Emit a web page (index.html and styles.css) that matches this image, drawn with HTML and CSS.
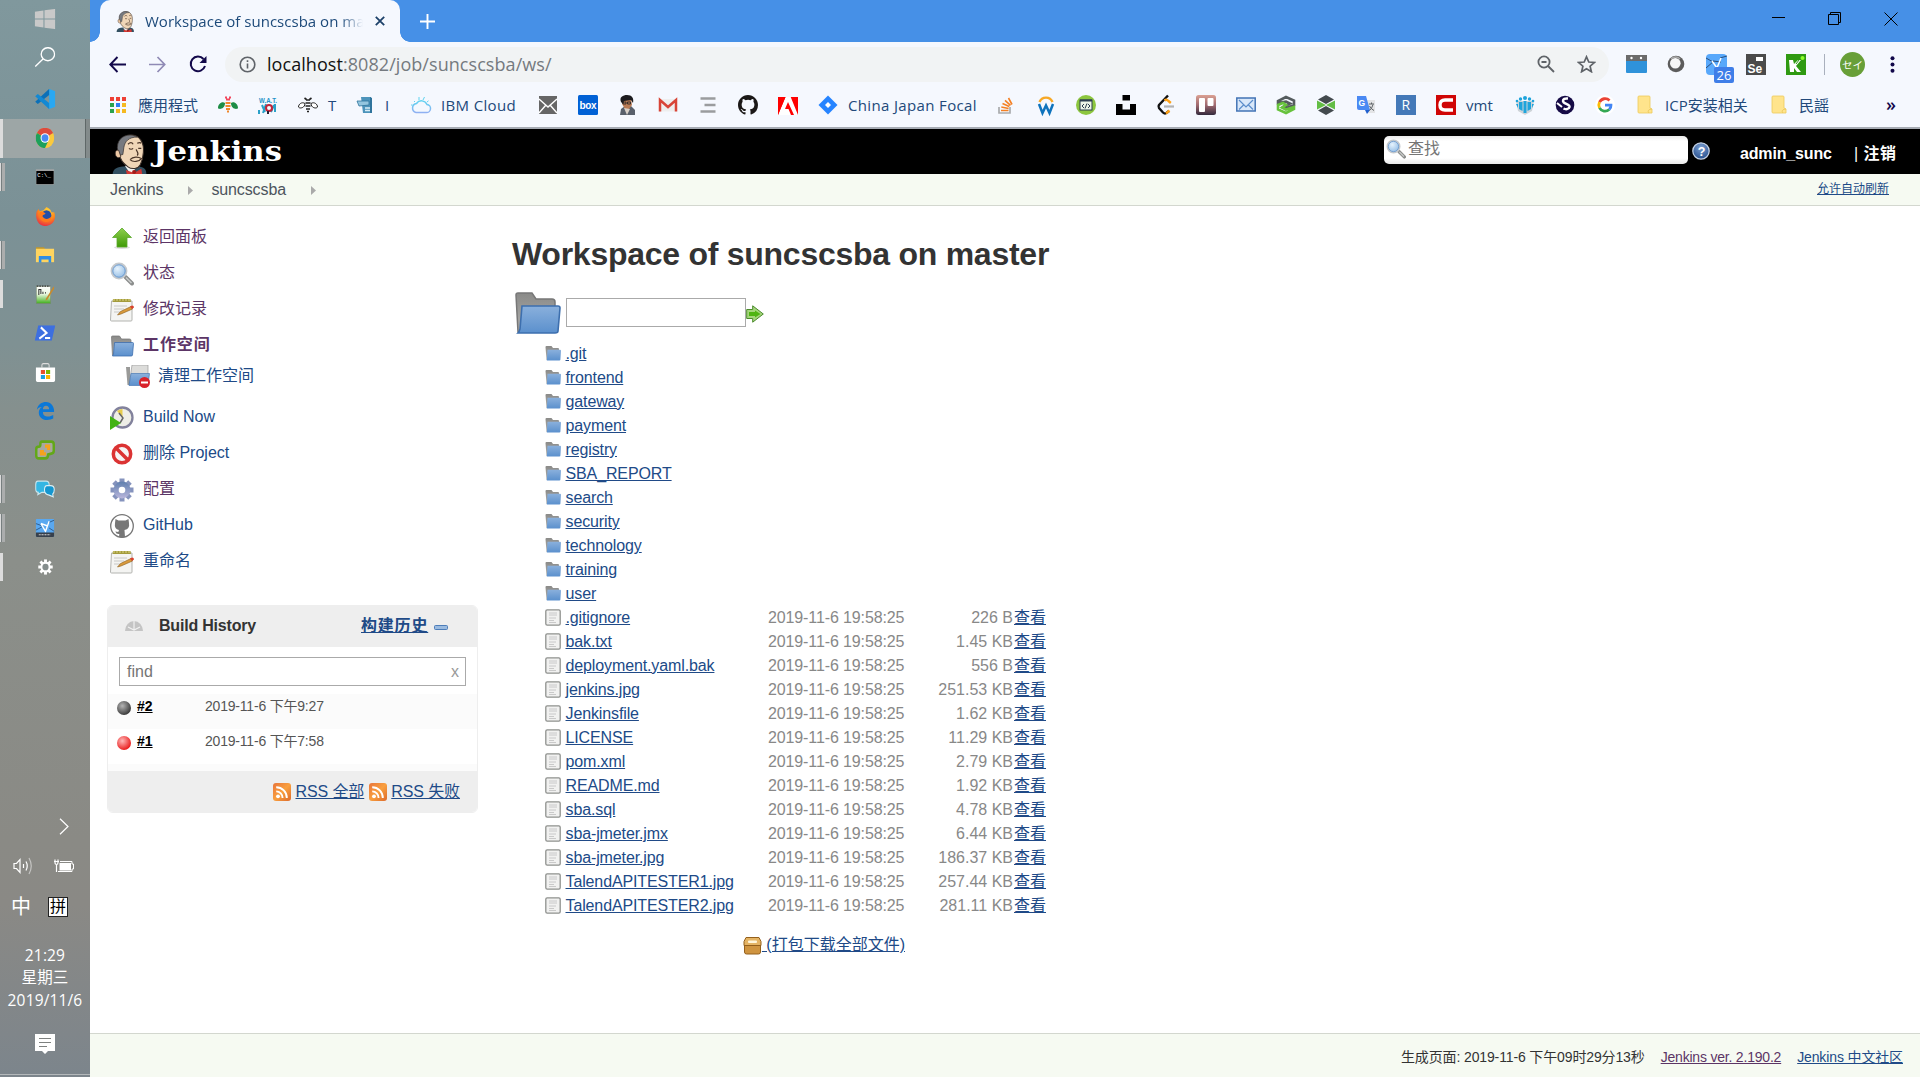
FILE: index.html
```html
<!DOCTYPE html>
<html lang="zh-CN">
<head>
<meta charset="utf-8">
<title>Workspace of suncscsba on master</title>
<link rel="stylesheet" href="styles.css">
</head>
<body>
<svg class="defs" width="0" height="0" aria-hidden="true">
  <defs>
    <linearGradient id="gBlue" x1="0" y1="0" x2="0" y2="1"><stop offset="0" stop-color="#8ab0dc"/><stop offset="1" stop-color="#5b90cd"/></linearGradient>
    <linearGradient id="gGray" x1="0" y1="0" x2="0" y2="1"><stop offset="0" stop-color="#8a8a88"/><stop offset="1" stop-color="#b0b0ae"/></linearGradient>
    <linearGradient id="gGreen" x1="0" y1="0" x2="0" y2="1"><stop offset="0" stop-color="#8fd04f"/><stop offset="1" stop-color="#3f9a06"/></linearGradient>
    <linearGradient id="gGear" x1="0" y1="0" x2="0" y2="1"><stop offset="0" stop-color="#5f7fae"/><stop offset="1" stop-color="#b9b6dc"/></linearGradient>
    <linearGradient id="gRss" x1="0" y1="0" x2="1" y2="1"><stop offset="0" stop-color="#e8743a"/><stop offset=".5" stop-color="#f9a03f"/><stop offset="1" stop-color="#dc6a2c"/></linearGradient>
    <linearGradient id="gTrello" x1="0" y1="0" x2="0" y2="1"><stop offset="0" stop-color="#dba193"/><stop offset=".5" stop-color="#a06a70"/><stop offset="1" stop-color="#33293c"/></linearGradient>
    <linearGradient id="gNote" x1="0" y1="0" x2="0" y2="1"><stop offset="0" stop-color="#fff"/><stop offset=".45" stop-color="#eaf7df"/><stop offset="1" stop-color="#3fae1c"/></linearGradient>
    <linearGradient id="gCloud" x1="0" y1="0" x2="0" y2="1"><stop offset="0" stop-color="#5fd3f0"/><stop offset="1" stop-color="#8fb0f2"/></linearGradient>
    <radialGradient id="gLens" cx=".4" cy=".35" r=".7"><stop offset="0" stop-color="#e6f3fd"/><stop offset="1" stop-color="#8db8e3"/></radialGradient>
    <radialGradient id="gBall" cx=".38" cy=".35" r=".65"><stop offset="0" stop-color="#b5b5b5"/><stop offset="1" stop-color="#3d3d3d"/></radialGradient>
    <radialGradient id="gRed" cx=".38" cy=".35" r=".65"><stop offset="0" stop-color="#ffb8b8"/><stop offset="1" stop-color="#ea2020"/></radialGradient>
    <radialGradient id="gHelp" cx=".5" cy=".3" r=".7"><stop offset="0" stop-color="#7c9fd0"/><stop offset="1" stop-color="#27508f"/></radialGradient>
    <radialGradient id="gFox" cx=".6" cy=".2" r=".9"><stop offset="0" stop-color="#ffd83a"/><stop offset=".5" stop-color="#ff8a1c"/><stop offset="1" stop-color="#e31c4c"/></radialGradient>
  </defs>
  <symbol id="butler" viewBox="0 0 34 40">
    <path d="M1 40c0-4 2-7 8-8l9-1 10 1c5 1 6 4 6 8z" fill="#335061"/>
    <path d="M13 31l6 9 6-9z" fill="#f2f2f0"/>
    <path d="M7 17C5 7 12 1 19 1c8 0 13 7 12 17-.3 4-1 8-3 12-2 4-8 5-12 2-4-3-8-6-9-15z" fill="#f0d6b7" stroke="#3b2f28" stroke-width="1"/>
    <path d="M6 17C4 6 11 1 18 1c3 0 5 1 7 2-8 0-12 4-13 10l-1 7-4 1z" fill="#777a80" stroke="#34302e" stroke-width=".7"/>
    <path d="M7 16c-3-1-4 2-3 5 1 2 3 3 5 1z" fill="#edc8a4" stroke="#3b2f28" stroke-width=".8"/>
    <path d="M16 10c2-2 4-2 5 0M25 9c2-1 3-1 4 0M17 14c1 1 3 1 4 0M26 14h3M24 15c1 3 3 4 1 6M18 25c3-3 8-3 11-1-2 3-8 4-11 1" fill="none" stroke="#4a3528" stroke-width="1.2"/>
    <path d="M14 35l8 3 7-4 1 6H15z" fill="#d33833"/><circle cx="22" cy="37" r="2" fill="#a51c18"/>
  </symbol>
  <symbol id="folder" viewBox="0 0 48 48">
    <path d="M3 8q0-2 2-2h14l4 6h16q3 0 3 3v30H5z" fill="url(#gGray)" stroke="#777" stroke-width="1.5"/>
    <path d="M9 19h36q2 0 2 2l-2 23q0 2-3 2H5q1-1 2-4z" fill="url(#gBlue)" stroke="#3d6fae" stroke-width="1.6"/>
  </symbol>
  <symbol id="folder-s" viewBox="0 0 16 20">
    <path d="M.5 4q0-1 1-1h5l1.500 2H13q1 0 1 1v11H1.500z" fill="url(#gGray)"/>
    <path d="M2.500 6.800H15q1 0 1 1l-.6 8.700q0 1-1 1H1.800z" fill="url(#gBlue)"/>
  </symbol>
  <symbol id="file" viewBox="0 0 16 20">
    <rect x=".8" y="2.800" width="14.400" height="15.400" rx="1.400" fill="#f1f1f0" stroke="#8f918e" stroke-width="1.300"/>
    <path d="M4 6h8M4 8h8M4 11h7M4 13.500h5M4 15.500h7" stroke="#c4c4c4" stroke-width=".9"/>
  </symbol>
  <symbol id="notepad" viewBox="0 0 24 24">
    <path d="M1.500 3h20.500v19q0 1-1 1H1.500q-1 0-1-1z" fill="#f4f4f2" stroke="#b3b4b0" stroke-width="1"/>
    <path d="M3 1h17.500l.5 3H2.500z" fill="#a39b3c"/><path d="M4 1v2M7 1v2M10 1v2M13 1v2M16 1v2M19 1v2" stroke="#e8e39a" stroke-width=".8"/>
    <path d="M4 8h13M4 11h10M4 14h6" stroke="#c8c8c6"/>
    <path d="M7.500 17l3-3.500L21 8.500l1.500 2.500L11 16z" fill="#d99a3c" stroke="#8a5c1b" stroke-width=".6"/><path d="M20 8.600l2-1q2 0 2 2l-2 1.500z" fill="#d9402c"/>
  </symbol>
  <symbol id="lens" viewBox="0 0 24 24">
    <path d="M15.500 15l6.500 6.500" stroke="#8b8d8c" stroke-width="4" stroke-linecap="round"/><path d="M16 15.500l5.500 5.500" stroke="#c9cbca" stroke-width="1.500"/>
    <circle cx="9" cy="9" r="7.400" fill="url(#gLens)" stroke="#c4c8cc" stroke-width="2"/><circle cx="9" cy="9" r="6.200" fill="none" stroke="#6c9bd0" stroke-width="1"/>
  </symbol>
  <symbol id="rss" viewBox="0 0 18 18"><rect width="18" height="18" rx="3" fill="url(#gRss)"/><circle cx="5" cy="13.300" r="1.900" fill="#fff"/><path d="M3.200 8.400a6.400 6.400 0 0 1 6.400 6.600M3.200 4.200a10.600 10.600 0 0 1 10.600 10.800" stroke="#fff" stroke-width="1.900" fill="none"/></symbol>
  <symbol id="cat" viewBox="0 0 16 16"><path d="M8 0C3.580 0 0 3.580 0 8c0 3.540 2.290 6.530 5.470 7.590.4.070.55-.17.55-.38 0-.19-.01-.82-.01-1.490-2.010.37-2.530-.49-2.690-.94-.09-.23-.48-.94-.82-1.130-.28-.15-.68-.52-.01-.53.630-.01 1.080.58 1.230.82.72 1.210 1.870.87 2.330.66.070-.52.28-.87.510-1.070-1.780-.2-3.640-.89-3.640-3.950 0-.87.31-1.590.82-2.150-.08-.2-.36-1.020.08-2.120 0 0 .67-.21 2.200.82a7.600 7.600 0 0 1 4 0c1.530-1.040 2.200-.82 2.200-.82.44 1.100.16 1.920.08 2.120.51.56.82 1.270.82 2.150 0 3.070-1.870 3.750-3.650 3.950.29.25.54.73.54 1.480 0 1.070-.01 1.930-.01 2.200 0 .21.15.46.55.38A8 8 0 0 0 16 8c0-4.420-3.580-8-8-8z" fill="#1b1817"/></symbol>
  <symbol id="note" viewBox="0 0 20 20"><path d="M4 1h10q1 0 1 1v11l2 1v4H4q-1 0-1-1V2q0-1 1-1z" fill="#ffe48c" stroke="#ecc95c" stroke-width=".8"/><path d="M14 18c-2-2 0-4 3-4" fill="none" stroke="#ecc95c"/></symbol>
</svg>

<aside class="taskbar">
  <div class="task task-start"><svg width="20" height="18" viewBox="0 0 20 18"><path d="M0 2.500l8.500-1.200v7.200H0zM9.500 1.200L20 0v8.500H9.500zM0 9.500h8.500v7.200L0 15.500zM9.500 9.500H20V18L9.500 16.800z" fill="#c9c9c9"/></svg></div>
  <div class="task task-search"><svg width="20" height="18" viewBox="0 0 20 18" fill="none" stroke="#fff" stroke-width="1.300"><ellipse cx="12.800" cy="6.500" rx="6.500" ry="5.800"/><path d="M8.300 10.500L.5 17.500"/></svg></div>
  <div class="task"><svg width="20" height="18" viewBox="0 0 20 18"><path d="M14 0l6 2v14l-6 2z" fill="#29a8f2"/><path d="M14 0v5.500L3 13.500.5 11.500z" fill="#0b70b8"/><path d="M14 18v-5.500L3 4.500.5 6.500z" fill="#1389d4"/></svg></div>
  <div class="task active solo"><svg width="18" height="18" viewBox="0 0 20 20"><circle cx="10" cy="10" r="10" fill="#fbc93d"/><path d="M10 10L1.300 5A10 10 0 0 1 18.700 5z" fill="#dd4b3e"/><path d="M10 10L1.300 5A10 10 0 0 0 10 20l4-8z" fill="#1da05c"/><circle cx="10" cy="10" r="4.800" fill="#fff"/><circle cx="10" cy="10" r="3.700" fill="#4a8af4"/></svg></div>
  <div class="task multi"><svg width="18" height="14" viewBox="0 0 18 14"><rect width="18" height="14" fill="#a8a8a8"/><rect x=".6" y="1.600" width="16.800" height="11.800" fill="#000"/><text x="1.500" y="6.600" font-family="Liberation Mono" font-size="5.500" fill="#fff">C:\_</text></svg></div>
  <div class="task"><svg width="19" height="18" viewBox="0 0 20 19"><path d="M1 5l2-2 1 2 4-1 3-3q5 2 5 5l3 0c3 9-4 13-9 13C2 19-1 11 1 5z" fill="url(#gFox)"/><circle cx="11" cy="9" r="5" fill="#234fa8"/><path d="M4 6c3-2 4 0 6 1-1 2-3 1-3 3 2 3 6 3 9 0 0 4-4 6-7 5C4 14 3 9 4 6z" fill="#ff7a1c"/></svg></div>
  <div class="task multi"><svg width="18" height="14" viewBox="0 0 18 14"><path d="M0 0h8l1 1.500H0z" fill="#d99a07"/><path d="M0 1.500h18V13.500H0z" fill="#ffd45f"/><path d="M3 14V8h12v6h-2.500v-3h-7v3z" fill="#2f8de4"/></svg></div>
  <div class="task solo"><svg width="18" height="18" viewBox="0 0 18 18"><rect x=".5" y="2" width="14" height="15.500" fill="url(#gNote)" stroke="#7a8a70" stroke-width=".6"/><path d="M1 2h13" stroke="#333" stroke-dasharray="1.500 1"/><path d="M3 10V5h2v4M7 7v2M9 8h1" stroke="#333" fill="none"/><path d="M17.500 2L10 13l-.5 2 1.800-1.200L18 4z" fill="#c98a2c"/></svg></div>
  <div class="task"><svg width="20" height="14" viewBox="0 0 20 14"><path d="M3.500 0H20l-3.500 14H0z" fill="#3d6fe0"/><path d="M6 2l5.500 5L4.500 12M10 11.500h5" stroke="#fff" stroke-width="1.900" fill="none"/></svg></div>
  <div class="task"><svg width="19" height="17" viewBox="0 0 19 17"><path d="M6 4V1.800Q6 .6 7.500.6h4Q13 .6 13 1.800V4" stroke="#ddd" fill="none"/><path d="M0 4h19v11q0 2-2 2H2q-2 0-2-2z" fill="#fff"/><path d="M5 6.300h4v3.500H5z" fill="#e8502c"/><path d="M10 6.300h4v3.500h-4z" fill="#7db800"/><path d="M5 10.700h4v3.500H5z" fill="#1ba1e2"/><path d="M10 10.700h4v3.500h-4z" fill="#fbb500"/></svg></div>
  <div class="task"><svg width="17" height="16" viewBox="0 0 17 16"><path d="M0 7C1 2 5 0 9 0c5 0 8 4 8 9H6c0 3 2 4 5 4 2 0 3.500-.6 5-1.400v3.200C14.500 15.600 12.500 16 10 16c-5 0-8-3-8-6.500 0-2 1-4 3-5C2.500 4.600 1 5.500 0 7zm6-.5h6c0-2-1-3.200-3-3.200S6 4.800 6 6.500z" fill="#0b78d8"/></svg></div>
  <div class="task"><svg width="20" height="18" viewBox="0 0 20 18"><path d="M7 1.500h9q2.500 0 2.500 2.500v6q0 2-2.500 2.200L13 13q0 3.500-3 3.500H4Q1.500 16.500 1.500 14V8Q1.500 6 4 6q1.500-.2 1.500-2Q5.500 1.500 7 1.500z" fill="#a7a8a0" stroke="#62a818" stroke-width="2.400"/><path d="M10 4h5v5h-3v-2h-2zM5 9h4v2h2v3H5z" fill="#f5a21c"/></svg></div>
  <div class="task multi"><svg width="20" height="16" viewBox="0 0 20 16"><path d="M3 1h8q3 0 3 3v4q0 3-4 3H7l-4 2 .500-2Q1 11 1 8V4q0-3 2-3z" fill="#35b6e3" stroke="#c9e6ee"/><path d="M12 5h3.500Q19 5 19 8.500q0 3-1.500 4l.5 2.500-4-1.500Q9.500 13 9.500 9T12 5z" fill="#1596cf" stroke="#dceef3"/></svg></div>
  <div class="task multi"><svg width="18" height="16" viewBox="0 0 18 16"><rect width="18" height="16" rx="1" fill="#5aa8f0"/><path d="M0 4l6 2M13 3l5-2M0 10l6-3M13 8l5 3" stroke="#2d5580" fill="none" stroke-width=".8"/><path d="M5 4l4.500 7L13 2M5 4l6 2" stroke="#fff" fill="none" stroke-width="1.300"/><path d="M0 12h18v3q0 1-1 1H1q-1 0-1-1z" fill="#37404c"/><path d="M3 14h11" stroke="#ddd" stroke-dasharray="1 .5"/></svg></div>
  <div class="task solo"><svg width="15" height="14" viewBox="0 0 20 20"><g stroke="#fff" stroke-width="4"><path d="M10 0v20M0 10h20M3 3l14 14M17 3L3 17"/></g><circle cx="10" cy="10" r="7" fill="#fff"/><circle cx="10" cy="10" r="4.300" fill="#858e8d"/></svg></div>

  <div class="tray">
    <div class="tray-row tray-more"><svg width="10" height="17" viewBox="0 0 10 17"><path d="M1 .7l8 7.800-8 7.800" fill="none" stroke="#fff" stroke-width="1.200"/></svg></div>
    <div class="tray-row tray-status">
      <svg width="21" height="18" viewBox="0 0 21 18" fill="none" stroke="#fff" stroke-width="1.200"><path d="M1 6.500h2.500L7 2.500v13l-3.500-4H1z"/><path d="M10.500 7v4"/><path d="M13 4.500q2.500 4.500 0 9"/><path d="M16 1q4.500 8 0 16" opacity=".5"/></svg>
      <svg width="20" height="14" viewBox="0 0 20 14"><path d="M1 .5v3q0 2 1.500 2T4 3.500v-3M2.500 5v8M0 2.500h5" stroke="#fff" stroke-width="1.200" fill="none"/><path d="M6 2.500h12v2.500h1.500v5H18v2.500H4" stroke="#fff" fill="none"/><path d="M5.500 4H17v7.500H5.500z" fill="#fff"/></svg>
    </div>
    <div class="tray-row tray-ime"><span class="ime-zh">中</span><span class="ime-pin">拼</span></div>
    <div class="clock"><span>21:29</span><span>星期三</span><span>2019/11/6</span></div>
    <div class="notify"><svg width="20" height="20" viewBox="0 0 20 20"><path d="M0 0h20v17h-7l-3 3-3-3H0z" fill="#fff"/><path d="M4 4.500h12M4 8.500h12M4 12.500h8" stroke="#7e817f" stroke-width="1.200"/></svg></div>
  </div>
</aside>

<div class="window">
  <div class="tabstrip">
    <div class="tab">
      <svg class="tab-icon" width="20" height="21"><use href="#butler"/></svg>
      <span class="tab-title">Workspace of suncscsba on ma</span>
      <svg width="10" height="10" viewBox="0 0 10 10"><path d="M.8.8l8.400 8.400M9.200.8L.8 9.200" stroke="#1d4169" stroke-width="1.800"/></svg>
    </div>
    <svg class="newtab" width="15" height="15" viewBox="0 0 15 15"><path d="M7.500 0v15M0 7.500h15" stroke="#fff" stroke-width="1.900"/></svg>
    <div class="winctl">
      <svg width="13" height="13" viewBox="0 0 13 13"><path d="M0 5.500h13" stroke="#000"/></svg>
      <svg width="13" height="13" viewBox="0 0 13 13" fill="none" stroke="#000"><path d="M.5 2.500h10v10H.5zM2.500 2.500v-2h10v10h-2"/></svg>
      <svg width="14" height="14" viewBox="0 0 14 14"><path d="M.5.5l13 13M13.500.5l-13 13" stroke="#000"/></svg>
    </div>
  </div>

  <div class="toolbar">
    <div class="nav">
      <svg width="17" height="17" viewBox="0 0 17 17" fill="none" stroke="#12084a" stroke-width="1.900"><path d="M17 8.500H1.500M8.500 1L1.300 8.500l7.200 7.500"/></svg>
      <svg width="17" height="17" viewBox="0 0 17 17" fill="none" stroke="#8f8ab5" stroke-width="1.700"><path d="M0 8.500h15.500M8.500 1l7.200 7.500L8.500 16"/></svg>
      <svg width="18" height="18" viewBox="0 0 18 18" fill="none" stroke="#12084a" stroke-width="2"><path d="M14.500 4A7.300 7.300 0 1 0 16 11"/><path d="M17.500 1v7h-7z" fill="#12084a" stroke="none"/></svg>
    </div>
    <div class="omnibox">
      <svg width="17" height="17" viewBox="0 0 17 17" fill="none" stroke="#5f6368" stroke-width="1.600"><circle cx="8.500" cy="8.500" r="7.300"/><path d="M8.500 7.500v5M8.500 4.300v1.700"/></svg>
      <span class="url"><b>localhost</b>:8082/job/suncscsba/ws/</span>
      <svg class="zoom-ic" width="18" height="18" viewBox="0 0 18 18" fill="none" stroke="#5f6368" stroke-width="1.800"><circle cx="7" cy="7" r="5.600"/><path d="M11 11l6 6M4.500 7h5"/></svg>
      <svg class="star-ic" width="19" height="18" viewBox="0 0 19 18" fill="none" stroke="#5f6368" stroke-width="1.700"><path d="M9.500 1.800l2.300 5.200 5.600.5-4.300 3.700 1.300 5.500-4.900-2.900-4.900 2.900 1.300-5.500L1.600 7.500l5.600-.5z"/></svg>
    </div>
    <div class="ext"><svg width="21" height="18" viewBox="0 0 21 18"><rect width="21" height="18" rx="1" fill="#2f92da"/><path d="M0 0h21v6H0z" fill="#6b6b6b"/><circle cx="5.500" cy="3" r="1.200" fill="#fff"/><circle cx="15" cy="3" r="1.200" fill="#fff"/></svg></div>
    <div class="ext"><svg width="18" height="18" viewBox="0 0 18 18"><circle cx="9" cy="9" r="8.300" fill="#5c5c5c"/><circle cx="8.300" cy="8.200" r="5.300" fill="#f7f7f7"/><path d="M4 4a6.300 6.300 0 0 1 9 0" stroke="#aaa" stroke-width="1.500" fill="none"/></svg></div>
    <div class="ext"><svg width="21" height="21" viewBox="0 0 21 21"><rect width="21" height="21" rx="4" fill="#58a8fb"/><path d="M0 4l7 4M14 4l7-2M0 14l8-7M7 7l8 1" stroke="#26456b" fill="none" stroke-width=".9"/><path d="M6 7l5 7 4-10" stroke="#fff" stroke-width="1.500" fill="none"/></svg><span class="badge">26</span></div>
    <div class="ext"><svg width="20" height="21" viewBox="0 0 20 21"><rect width="20" height="21" fill="#4b4b4b"/><path d="M10 3h7v4h-7z" fill="#fff"/><text x="1.500" y="18.500" font-family="Liberation Sans" font-weight="bold" font-size="12" fill="#fff">Se</text></svg></div>
    <div class="ext"><svg width="20" height="21" viewBox="0 0 20 21"><rect width="20" height="21" fill="#2f9a12"/><path d="M3 6h4l1 4 4-4h3l-5 6 5 6h-4l-3-4v4H4z" fill="#fff"/><path d="M13 6l-3 4" stroke="#2f9a12"/><circle cx="16.500" cy="4" r="2" fill="#8fff2a"/></svg></div>
    <div class="vsep"></div>
    <div class="avatar">セイ</div>
    <svg class="kebab" width="5" height="17" viewBox="0 0 5 17" fill="#12084a"><circle cx="2.500" cy="2.200" r="2"/><circle cx="2.500" cy="8.500" r="2"/><circle cx="2.500" cy="14.800" r="2"/></svg>
  </div>

  <div class="bookmarks">
    <a class="bm"><svg viewBox="0 0 20 20"><g><path d="M2 2h4v4H2zM8 2h4v4H8zM14 2h4v4h-4z" fill="#ee4035"/><path d="M2 8h4v4H2zM2 14h4v4H2z" fill="#2ba24c"/><path d="M8 8h4v4H8z" fill="#2f7cf0"/><path d="M8 14h4v4H8zM14 8h4v4h-4zM14 14h4v4h-4z" fill="#f5b921"/></g></svg><span style="width:60px">應用程式</span></a>
    <a class="bm"><svg viewBox="0 0 20 20"><path d="M7 8C4 6 0 9 0 13c1 2 7 1 7-5zM13 8c3-2 7 1 7 5-1 2-7 1-7-5z" fill="#1d8d45"/><path d="M7.500 8h5M7.500 11h5M8 14h4M9 16.500h2" stroke="#f0872a" stroke-width="1.800"/><path d="M8 4.500h4M7 2.500h2M11 2.500h2" stroke="#f2475c" stroke-width="2.200"/></svg></a>
    <a class="bm"><svg viewBox="0 0 20 20"><text x="1" y="7.500" font-family="Liberation Sans" font-weight="bold" font-size="7.500" textLength="18" lengthAdjust="spacingAndGlyphs" fill="#2392c8">W.A.T.</text><path d="M1 15v4M4 10l3 7M8 9l-3 9M16 10l-3 7M17 9v8" stroke="#2aa0c8" stroke-width="2"/><circle cx="11" cy="13" r="3" fill="none" stroke="#c2243a" stroke-width="2"/><path d="M10 16v3" stroke="#223" stroke-width="2"/></svg></a>
    <a class="bm"><svg viewBox="0 0 20 20"><path d="M7 8.500C4 6.500.5 9 .5 12c1 2 6.500 1 6.500-3.500zM13 8.500c3-2 6.500.5 6.500 3.500-1 2-6.500 1-6.500-3.500z" fill="#fff" stroke="#222" stroke-width="1"/><path d="M7.500 8h5M7.500 11h5M8 14h4M9 16.500h2M8 5h4M6.500 3l2 1.500M13.500 3l-2 1.500" stroke="#222" stroke-width="1.600"/></svg><span style="width:7px">T</span></a>
    <a class="bm"><svg viewBox="0 0 20 20"><path d="M6 2h10l1 16H8z" fill="#4d94bb"/><path d="M2 6l12 0v4L4 11z" fill="#94c6df" stroke="#2f749c" stroke-width=".8"/><path d="M10 13h5M10 15.500h5" stroke="#d8edf7" stroke-width="1.300"/><path d="M15 2l2 1v15h-2z" fill="#2f749c"/></svg><span style="width:6px">I</span></a>
    <a class="bm"><svg viewBox="0 0 20 20"><path d="M5 17.500h10a4 4 0 0 0 1-8 6 6 0 0 0-10.500-1A4.600 4.600 0 0 0 5 17.500z" fill="none" stroke="url(#gCloud)" stroke-width="1.500"/><path d="M4 7l-1-1M8 5V2M12 5l1.500-3M1.500 10H0M16 7l1.500-1.200" stroke="#5fd3f0"/></svg><span class="wide" style="width:77px">IBM Cloud</span></a>
    <a class="bm"><svg viewBox="0 0 20 20"><path d="M1 1h18v18H1z" fill="#666"/><path d="M1 4l9 8 9-8M1 18l7-8M19 18l-7-8" fill="none" stroke="#fff" stroke-width="1.400"/></svg></a>
    <a class="bm"><svg viewBox="0 0 20 20"><rect width="20" height="20" rx="1.500" fill="#0161d5"/><text x="1.500" y="13.600" font-family="Liberation Sans" font-weight="bold" font-size="10" textLength="17" fill="#fff">box</text></svg></a>
    <a class="bm"><svg viewBox="0 0 20 20"><path d="M2 20l1-6 4-3h6l4 4v5z" fill="#59606b"/><path d="M5 4h8l1 6-3 4H7L4 9z" fill="#b97b55"/><path d="M3 7C1 2 5 0 9 0c5 0 7 3 6 8l-2-3-7 1-1 3z" fill="#1c1b1e"/><path d="M5 7h3v2H5zM9.500 7h3v2h-3z" fill="none" stroke="#222" stroke-width=".8"/><path d="M6 13l3 7 3-6" fill="#d8d0c8"/></svg></a>
    <a class="bm"><svg viewBox="0 0 20 20"><path d="M1 4h18v12.500H1z" fill="#eee"/><path d="M2 16.500V5l8 7 8-7v11.500" fill="none" stroke="#d84437" stroke-width="2.500"/></svg></a>
    <a class="bm"><svg viewBox="0 0 20 20"><path d="M2.500 3.500h15M6.500 10h11M2.500 16.500h15" stroke="#9a9c9e" stroke-width="2.600"/></svg></a>
    <a class="bm"><svg viewBox="0 0 20 20"><use href="#cat"/></svg></a>
    <a class="bm"><svg viewBox="0 0 20 20"><path d="M0 2h20v18H0z" fill="#f00"/><path d="M7.500 2h5.200L20 20h-4L10 7 7 14h3.500l2.500 6H0z" fill="#fff"/><path d="M0 2h7.500L0 20z" fill="#f00"/></svg></a>
    <a class="bm"><svg viewBox="0 0 20 20"><path d="M10 .5l9.500 9.500-9.500 9.500L.5 10z" fill="#2684ff"/><path d="M10 7l3 3-3 3-3-3z" fill="#fff"/></svg><span class="wide" style="width:128px">China Japan Focal</span></a>
    <a class="bm"><svg viewBox="0 0 20 20"><path d="M3 12v6h11v-6" fill="none" stroke="#a9abad" stroke-width="1.700"/><path d="M5 15.500h7.500M5.300 12l7.300 1.500M6.500 8.500l6.800 3M9 5.300l5.500 5M12.500 3l3.500 6.500" stroke="#f48024" stroke-width="1.600"/></svg></a>
    <a class="bm"><svg viewBox="0 0 20 20"><path d="M3.500 7a7 7 0 0 1 13 0" fill="none" stroke="#f7a826" stroke-width="2.400"/><path d="M3 9l3.500 9L10 10.500l3.500 7.500L17 9" fill="none" stroke="#0e73bd" stroke-width="2.500"/></svg></a>
    <a class="bm"><svg viewBox="0 0 20 20"><circle cx="10" cy="10" r="10" fill="#8cc63f"/><rect x="4" y="5" width="12" height="10" fill="#eef5e8" stroke="#2d3e50" stroke-width="1"/><path d="M4 5.500h12" stroke="#2d3e50" stroke-width="2"/><path d="M8 9l-2 2 2 2M12 9l2 2-2 2M11 8.500l-2 5" fill="none" stroke="#2d3e50"/></svg></a>
    <a class="bm"><svg viewBox="0 0 20 20"><path d="M6.500 0h7.500v5.500H6.500zM0 9h6.500v5.500H14V9h6v11H0z" fill="#000"/></svg></a>
    <a class="bm"><svg viewBox="0 0 20 20"><path d="M12 .5L3 10q-1 1.500 0 3l4 4.500q2 2 4 0l2-1.500" fill="none" stroke="#111" stroke-width="2.400"/><path d="M8.500 5.500q2-1.500 4 .5l2.300 2M10 18.500l3.500-3" fill="none" stroke="#ffa116" stroke-width="2.400"/><path d="M8 11.500h10" stroke="#b3b3b3" stroke-width="2.200"/></svg></a>
    <a class="bm"><svg viewBox="0 0 20 20"><rect width="20" height="20" rx="2.500" fill="url(#gTrello)"/><rect x="3" y="3" width="6" height="14" rx="1" fill="#fff"/><rect x="11.500" y="3" width="6" height="8" rx="1" fill="#fff"/></svg></a>
    <a class="bm"><svg viewBox="0 0 20 20"><rect x=".8" y="3" width="18.400" height="13" fill="#d9e8fa" stroke="#4273b5" stroke-width="1.500"/><path d="M3 5l7 7 7-7M3 14.500l5-5M17 14.500l-5-5" fill="none" stroke="#5b8dcb" stroke-width="1.200"/></svg></a>
    <a class="bm"><svg viewBox="0 0 20 20"><path d="M2 8V6l8-4 8 3.500V10l-7 3-3-1.500 6-3-4-2z" fill="none" stroke="#555c5e" stroke-width="2.600"/><path d="M18 12v2l-8 4-8-3.500V10l5-2 3 2-4 2.500 4 2z" fill="none" stroke="#67c23c" stroke-width="2.600"/></svg></a>
    <a class="bm"><svg viewBox="0 0 20 20"><path d="M10 0l8 4.500-8 4.500-8-4.500zM10 11l8 4.500-8 4.500-8-4.500z" fill="#434a4e"/><path d="M1 5.500l9 4.500-9 4.500zM19 5.500L10 10l9 4.500z" fill="#63bd45"/></svg></a>
    <a class="bm"><svg viewBox="0 0 20 20"><path d="M8 5h11v13H11z" fill="#e3e4e6"/><path d="M1 1h9l4 14H3q-2 0-2-2z" fill="#4a89f3"/><path d="M9 15h5l-3 4z" fill="#1f5fd0"/><text x="2.500" y="11" font-family="Liberation Sans" font-weight="bold" font-size="8.500" fill="#fff">G</text><path d="M13 9h5M15.500 7.500V9M17 9.500q-1 4-3.500 6M13.500 11q1.500 3 4.500 4.500" stroke="#5d6266" fill="none"/></svg></a>
    <a class="bm"><svg viewBox="0 0 20 20"><rect width="20" height="20" fill="#4479b8"/><text x="5.500" y="15" font-family="Open Sans" font-size="14" fill="#fff">R</text></svg></a>
    <a class="bm"><svg viewBox="0 0 20 20"><rect width="20" height="20" fill="#d00606"/><path d="M17 5H9q-5 0-5 5t5 5h8" fill="none" stroke="#fff" stroke-width="3.400"/></svg><span style="width:29px">vmt</span></a>
    <a class="bm"><svg viewBox="0 0 20 20"><path d="M1 6h18l-2 10-7 4-7-4z" fill="#cdd3d8"/><g fill="#1ea4dc"><circle cx="10" cy="3" r="2"/><circle cx="5.500" cy="4" r="1.700"/><circle cx="14.500" cy="4" r="1.700"/><circle cx="2" cy="6" r="1.300"/><circle cx="18" cy="6" r="1.300"/><path d="M8.500 6h3v12h-3zM4 7h3.500v9L4 14zM12.500 7H16v7l-3.500 2zM1 9h2v4zM19 9h-2v4z"/></g></svg></a>
    <a class="bm"><svg viewBox="0 0 20 20"><circle cx="10" cy="10" r="9.300" fill="#160b46"/><path d="M13 3.500q-5-.5-5 2.500c0 3 7 3 6.500 6-.5 2.500-4 2.500-6 1.500" fill="none" stroke="#fff" stroke-width="2.500"/><path d="M2 8l5 4" stroke="#fff" stroke-width="2"/></svg></a>
    <a class="bm"><svg viewBox="0 0 20 20"><circle cx="10" cy="10" r="10" fill="#fff"/><g fill="none" stroke-width="2.800"><path d="M14.500 5.500A6.200 6.200 0 0 0 4.500 7.200" stroke="#ea4335"/><path d="M4.500 7.200a6.200 6.200 0 0 0 0 5.600" stroke="#fbbc05"/><path d="M4.500 12.800a6.200 6.200 0 0 0 9.700 1.700" stroke="#34a853"/><path d="M14.200 14.500q2-2 1.800-4.300h-6" stroke="#4285f4"/></g></svg></a>
    <a class="bm"><svg viewBox="0 0 20 20"><use href="#note"/></svg><span style="width:84px">ICP安装相关</span></a>
    <a class="bm"><svg viewBox="0 0 20 20"><use href="#note"/></svg><span style="width:31px">民謡</span></a>
    <span class="more">»</span>
  </div>

  <header class="jk-header">
    <svg class="logo" width="176" height="45" viewBox="0 0 176 45"><svg x="-1" y="5" width="38" height="41"><use href="#butler"/></svg><text x="42" y="32" font-family="DejaVu Serif, serif" font-weight="bold" font-size="28" textLength="129" lengthAdjust="spacingAndGlyphs" fill="#fff">Jenkins</text></svg>
    <div class="search"><svg width="20" height="20"><use href="#lens"/></svg><span>查找</span></div>
    <svg class="help" width="18" height="18" viewBox="0 0 18 18"><circle cx="9" cy="9" r="8.200" fill="url(#gHelp)" stroke="#c3d0e4" stroke-width="1.300"/><text x="5.700" y="13.500" font-family="Liberation Sans" font-weight="bold" font-size="12.500" fill="#fff">?</text></svg>
    <b class="user">admin_sunc</b>
    <b class="logout"><i>|</i> 注销</b>
  </header>

  <div class="crumbs">
    <a>Jenkins</a><svg width="5" height="9" viewBox="0 0 5 9"><path d="M0 0l5 4.500L0 9z" fill="#aaa"/></svg>
    <a>suncscsba</a><svg width="5" height="9" viewBox="0 0 5 9"><path d="M0 0l5 4.500L0 9z" fill="#aaa"/></svg>
    <a class="auto">允许自动刷新</a>
  </div>

  <div class="page">
    <div class="side">
      <nav class="tasks">
        <a class="v"><svg viewBox="0 0 24 24"><ellipse cx="12" cy="21.500" rx="8" ry="1.500" fill="#ddd"/><path d="M12 2l9.500 9.500H17V21H7v-9.500H2.500z" fill="url(#gGreen)" stroke="#5aa82c" stroke-width=".8"/></svg>返回面板</a>
        <a class="v"><svg viewBox="0 0 24 24"><use href="#lens"/></svg>状态</a>
        <a class="v"><svg viewBox="0 0 24 24"><use href="#notepad"/></svg>修改记录</a>
        <a class="v cur"><svg viewBox="0 0 24 24"><use href="#folder"/></svg>工作空间</a>
        <a class="sub"><svg viewBox="0 0 24 24"><path d="M0 2h4v18H1.500z" fill="#9a9a98"/><path d="M6 0h16v14H4z" fill="#dcdcda" stroke="#999" stroke-width=".7"/><path d="M5 8.500h18.500l-1.500 12H3z" fill="url(#gBlue)" stroke="#4a7ab4" stroke-width=".7"/><circle cx="18.500" cy="17.500" r="5.500" fill="#d9222a"/><path d="M15 17.500h7" stroke="#fff" stroke-width="2"/></svg>清理工作空间</a>
        <a class="build"><svg viewBox="0 0 24 24"><circle cx="12.500" cy="11.500" r="10" fill="#eeeee6" stroke="#82829c" stroke-width="2.300"/><path d="M12.500 11.500L7 5q3-2 5.500-2z" fill="#e6cc4c"/><path d="M9 7l4 5-3 5" fill="none" stroke="#666" stroke-width="1.500"/><path d="M0 10l11 7-11 7z" fill="#43b315"/></svg>Build Now</a>
        <a><svg viewBox="0 0 24 24"><circle cx="12" cy="12" r="8.700" fill="#f6f4f4" stroke="#db3333" stroke-width="3.500"/><path d="M6 6l12 12" stroke="#db3333" stroke-width="3.500"/></svg>删除 Project</a>
        <a class="v"><svg viewBox="0 0 24 24"><g stroke="#8593bd" stroke-width="5"><path d="M12 .5v23M.5 12h23M4 4l16 16M20 4L4 20"/></g><circle cx="12" cy="12" r="8.500" fill="url(#gGear)"/><circle cx="12" cy="12" r="3.300" fill="#fff"/></svg>配置</a>
        <a><svg viewBox="0 0 24 24"><circle cx="12" cy="12" r="11.300" fill="#fff" stroke="#777" stroke-width="1.300"/><path d="M5.500 5l3 1.500h7l3-1.500.5 4q1 6-4.500 7l.5 7q-3 1-6 0l.3-3q-3 .5-4-2.500l3 .5.700-2Q4 15 5 9z" fill="#777"/></svg>GitHub</a>
        <a><svg viewBox="0 0 24 24"><use href="#notepad"/></svg>重命名</a>
      </nav>

      <section class="history">
        <div class="h-head">
          <svg width="18" height="14" viewBox="0 0 18 14"><path d="M0 13a9 10 0 0 1 18 0z" fill="#c4c4c4"/><path d="M9 12V3M3 9l6 3 6-3" stroke="#f1f1f1" stroke-width="1.200" fill="none"/></svg>
          <b>Build History</b><a>构建历史</a>
          <svg width="14" height="5" viewBox="0 0 14 5"><rect x=".5" y=".5" width="13" height="4" rx="1" fill="#9bbbe0" stroke="#4d7db9"/></svg>
        </div>
        <div class="h-find"><div class="find"><span>find</span><i>x</i></div></div>
        <div class="h-row odd"><svg width="16" height="16" viewBox="0 0 16 16"><circle cx="8" cy="8" r="7" fill="url(#gBall)"/></svg><a>#2</a><span>2019-11-6 下午9:27</span></div>
        <div class="h-row"><svg width="16" height="16" viewBox="0 0 16 16"><circle cx="8" cy="8" r="7" fill="url(#gRed)"/></svg><a>#1</a><span>2019-11-6 下午7:58</span></div>
        <div class="h-pad"></div>
        <div class="h-foot"><svg width="18" height="18"><use href="#rss"/></svg><a>RSS 全部</a><svg width="18" height="18"><use href="#rss"/></svg><a>RSS 失败</a></div>
      </section>
    </div>

    <main class="main">
      <h1>Workspace of suncscsba on master</h1>
      <div class="path">
        <svg class="big" width="48" height="48"><use href="#folder"/></svg>
        <div class="path-input"></div>
        <svg class="go" width="18" height="18" viewBox="0 0 18 18"><path d="M.7 4.500h6V.8L17.300 9 6.700 17.200V13.500h-6z" fill="#a5d67c" stroke="#4b8a2c"/><path d="M3 7h6V5.500L14.500 9 9 12.500V11H3z" fill="#4fb512"/></svg>
      </div>
      <div class="files">
        <div class="row"><svg><use href="#folder-s"/></svg><a>.git</a></div>
        <div class="row"><svg><use href="#folder-s"/></svg><a>frontend</a></div>
        <div class="row"><svg><use href="#folder-s"/></svg><a>gateway</a></div>
        <div class="row"><svg><use href="#folder-s"/></svg><a>payment</a></div>
        <div class="row"><svg><use href="#folder-s"/></svg><a>registry</a></div>
        <div class="row"><svg><use href="#folder-s"/></svg><a>SBA_REPORT</a></div>
        <div class="row"><svg><use href="#folder-s"/></svg><a>search</a></div>
        <div class="row"><svg><use href="#folder-s"/></svg><a>security</a></div>
        <div class="row"><svg><use href="#folder-s"/></svg><a>technology</a></div>
        <div class="row"><svg><use href="#folder-s"/></svg><a>training</a></div>
        <div class="row"><svg><use href="#folder-s"/></svg><a>user</a></div>
        <div class="row"><svg><use href="#file"/></svg><a>.gitignore</a><time>2019-11-6 19:58:25</time><span>226 B</span><a>查看</a></div>
        <div class="row"><svg><use href="#file"/></svg><a>bak.txt</a><time>2019-11-6 19:58:25</time><span>1.45 KB</span><a>查看</a></div>
        <div class="row"><svg><use href="#file"/></svg><a>deployment.yaml.bak</a><time>2019-11-6 19:58:25</time><span>556 B</span><a>查看</a></div>
        <div class="row"><svg><use href="#file"/></svg><a>jenkins.jpg</a><time>2019-11-6 19:58:25</time><span>251.53 KB</span><a>查看</a></div>
        <div class="row"><svg><use href="#file"/></svg><a>Jenkinsfile</a><time>2019-11-6 19:58:25</time><span>1.62 KB</span><a>查看</a></div>
        <div class="row"><svg><use href="#file"/></svg><a>LICENSE</a><time>2019-11-6 19:58:25</time><span>11.29 KB</span><a>查看</a></div>
        <div class="row"><svg><use href="#file"/></svg><a>pom.xml</a><time>2019-11-6 19:58:25</time><span>2.79 KB</span><a>查看</a></div>
        <div class="row"><svg><use href="#file"/></svg><a>README.md</a><time>2019-11-6 19:58:25</time><span>1.92 KB</span><a>查看</a></div>
        <div class="row"><svg><use href="#file"/></svg><a>sba.sql</a><time>2019-11-6 19:58:25</time><span>4.78 KB</span><a>查看</a></div>
        <div class="row"><svg><use href="#file"/></svg><a>sba-jmeter.jmx</a><time>2019-11-6 19:58:25</time><span>6.44 KB</span><a>查看</a></div>
        <div class="row"><svg><use href="#file"/></svg><a>sba-jmeter.jpg</a><time>2019-11-6 19:58:25</time><span>186.37 KB</span><a>查看</a></div>
        <div class="row"><svg><use href="#file"/></svg><a>TalendAPITESTER1.jpg</a><time>2019-11-6 19:58:25</time><span>257.44 KB</span><a>查看</a></div>
        <div class="row"><svg><use href="#file"/></svg><a>TalendAPITESTER2.jpg</a><time>2019-11-6 19:58:25</time><span>281.11 KB</span><a>查看</a></div>
      </div>
      <div class="zip"><svg width="19" height="19" viewBox="0 0 19 19"><path d="M1.500 8.500h16V16q0 2-2 2h-12q-2 0-2-2z" fill="#cf9440" stroke="#94601c"/><path d="M3 1.500h13l2 4v4H1v-4z" fill="#e5b464" stroke="#94601c"/><rect x="5" y="4.500" width="9" height="2.500" rx="1" fill="#fff6dc"/></svg><a>&nbsp;(打包下载全部文件)</a></div>
    </main>
  </div>

  <footer class="footer"><span class="f-date">生成页面: 2019-11-6 下午09时29分13秒</span><a class="f-ver">Jenkins ver. 2.190.2</a><a class="f-cn">Jenkins 中文社区</a></footer>
</div>
</body>
</html>
```
FILE: styles.css
```css
* { box-sizing: border-box; }
body { margin: 0; width: 1920px; height: 1077px; overflow: hidden; display: flex; background: #fff; font: 16px/24px "Liberation Sans", "Noto Sans CJK SC", sans-serif; color: #333; }
svg { display: block; flex: none; }
.defs { position: absolute; }

/* taskbar */
.taskbar { width: 90px; height: 1077px; display: flex; flex-direction: column; background: linear-gradient(180deg, #80989d 0, #7b9196 20%, #7f9193 32%, #85908e 38%, #8b8f8a 52%, #8a8a85 78%, #8a8985 84%, #80868a 96%, #7c858c 100%); color: #fff; }
.task { flex: none; height: 39px; display: flex; align-items: center; justify-content: center; position: relative; }
.task svg { transform: scale(1.03, 1.12); }
.task-start { height: 38px; }
.task-search { height: 41.500px; padding-bottom: 3px; }
.solo::before, .multi::before { content: ""; position: absolute; left: 0; top: 5px; width: 3px; height: 28px; background: #dcdcdc; }
.multi::before { width: 5px; background: linear-gradient(90deg, #dcdcdc 1px, #777f80 1px 2px, #abadad 2px); }
.active { background: linear-gradient(90deg, #9da6a6 85px, #5f6868 85px 86px, #838b8b 86px); }
.active::before { top: 0; height: 39px; }
.tray { margin-top: auto; }
.tray-row { height: 40px; display: flex; align-items: center; }
.tray-more { padding-left: 59px; }
.tray-status { padding-left: 13px; gap: 20px; height: 41px; padding-bottom: 2px; }
.tray-ime { padding-left: 11px; gap: 17px; }
.ime-zh { font-size: 20px; }
.ime-pin { width: 20px; height: 20px; border: 1px solid #222; background: #fff; color: #000; font-size: 16px; line-height: 17px; text-align: center; }
.clock { padding-top: 17px; height: 84px; display: flex; flex-direction: column; align-items: center; font: 15.500px/22.400px "Open Sans", "Noto Sans CJK SC", sans-serif; letter-spacing: .15px; }
.notify { height: 64px; padding: 23px 35px 0; border-bottom: 1px solid #b4b8ba; margin-bottom: 2px; }

/* browser chrome */
.window { flex: 1; display: flex; flex-direction: column; min-width: 0; }
.tabstrip { height: 42px; background: #4690e7; display: flex; align-items: center; }
.tab { width: 300px; height: 42px; margin-left: 10px; padding-left: 15px; display: flex; align-items: center; background: #f5f8fe; border-radius: 10px 10px 0 0; position: relative; }
.tab::before, .tab::after { content: ""; position: absolute; bottom: 0; width: 10px; height: 10px; }
.tab::before { left: -10px; background: radial-gradient(circle at 0 0, #4690e7 9.500px, #f5f8fe 10px); }
.tab::after { right: -10px; background: radial-gradient(circle at 100% 0, #4690e7 9.500px, #f5f8fe 10px); }
.tab-title { width: 220px; margin: 0 10px 0 10px; overflow: hidden; white-space: nowrap; font: 15px/24px "Open Sans", sans-serif; letter-spacing: .02px; color: #1d4a7a; -webkit-mask-image: linear-gradient(90deg, #000 195px, transparent 218px); mask-image: linear-gradient(90deg, #000 195px, transparent 218px); }
.newtab { margin-left: 20px; }
.winctl { margin: -5px 22px 0 auto; display: flex; gap: 43px; }
.toolbar { height: 44px; background: #f5f8fe; display: flex; align-items: center; }
.nav { width: 135px; padding-left: 19px; display: flex; align-items: center; gap: 23px; }
.omnibox { width: 1384px; height: 35px; border-radius: 18px; background: #f1f3f4; display: flex; align-items: center; padding: 0 14px; margin-right: 7px; }
.url { margin-left: 11px; font: 18px/28px "Open Sans", sans-serif; color: #757a7f; letter-spacing: .06px; }
.url b { font-weight: 400; color: #111; }
.zoom-ic { margin-left: auto; }
.star-ic { margin: 0 -1px 0 22px; }
.ext { width: 40px; display: flex; justify-content: center; position: relative; }
.badge { position: absolute; left: 18px; top: 13px; width: 20px; height: 16px; border-radius: 2px; background: #3f7ee8; color: #fff; font: 13px/16px "Open Sans", sans-serif; text-align: center; }
.vsep { width: 1px; height: 21px; background: #a9b0bd; margin-left: 8px; }
.avatar { width: 25px; height: 25px; border-radius: 50%; background: #689f38; color: #fff; font: 10.500px/25px "Noto Sans CJK JP", sans-serif; text-align: center; margin-left: 15px; white-space: nowrap; }
.kebab { margin-left: 25px; }
.bookmarks { height: 43px; padding: 0 24px 3px 18px; background: #f5f8fe; border-bottom: 2px solid #a6abb3; display: flex; align-items: center; gap: 20px; }
.bm { display: flex; align-items: center; gap: 10px; height: 20px; }
.bm svg { width: 20px; height: 20px; overflow: visible; }
.bm span { font: 15px/20px "Open Sans", "Noto Sans CJK TC", sans-serif; color: #22497a; white-space: nowrap; }
.bm .wide { letter-spacing: .35px; }
.more { margin-left: auto; font: 600 18px/20px "Open Sans", sans-serif; color: #12084a; padding-bottom: 3px; }

/* header */
.jk-header { height: 45px; background: #000; color: #fff; display: flex; align-items: center; padding-left: 21px; }
.search { width: 304px; height: 28px; margin: -4px 0 0 1097px; border-radius: 5px; background: linear-gradient(#e9e9e9, #fff 5px, #fff 22px, #e9e9e9); display: flex; align-items: center; padding: 0 0 1px 2px; color: #757575; gap: 2px; }
.help { margin: -2px 0 0 4px; }
.user { margin: 4px 0 0 30px; width: 92px; white-space: nowrap; letter-spacing: -.15px; }
.logout { margin: 4px 0 0 22px; white-space: nowrap; letter-spacing: .5px; }
.logout i { font-style: normal; font-weight: 400; }
.crumbs { height: 32px; background: #f6faf2; border-bottom: 1px solid #d3d7cf; display: flex; align-items: center; padding: 0 31px 0 20px; color: #4d545d; letter-spacing: -.12px; }
.crumbs svg { margin: 1px 18px 0 25px; }
.auto { margin: -2px 0 0 auto; font-size: 12px; letter-spacing: 0; color: #204a87; text-decoration: underline; }

/* side panel */
.page { flex: 1; display: flex; min-height: 0; }
.side { width: 400px; padding: 13px 0 0 17px; }
.tasks { height: 386px; padding: 0 0 0 3px; }
.tasks a { display: flex; align-items: center; height: 36px; gap: 9px; color: #204a87; line-height: 34px; padding-bottom: 1px; }
.tasks svg { width: 24px; height: 24px; margin-top: 3px; }
.tasks .v { color: #5c3566; }
.tasks .cur { font-weight: 700; letter-spacing: .9px; }
.tasks .cur svg { margin-top: 1px; }
.tasks .sub { height: 32px; padding: 0 0 5px 16px; margin-top: -1px; gap: 8px; }
.tasks .build { margin-top: 5px; }
.history { width: 371px; height: 208px; border: 1px solid #eee; border-radius: 6px; overflow: hidden; }
.h-head { height: 41px; background: #eee; display: flex; align-items: center; padding: 0 0 2px 17px; }
.h-head svg { margin-top: -2px; }
.h-head b { margin-left: 16px; width: 202px; color: #333; letter-spacing: -.2px; }
.h-head a { font-weight: 700; color: #204a87; text-decoration: underline; margin-right: 6px; width: 67px; letter-spacing: .8px; white-space: nowrap; }
.h-head svg:last-child { margin-top: 3px; }
.h-find { height: 47px; padding: 10px 11px; }
.find { height: 29px; border: 1px solid #aaa; padding: 0 6px 0 7px; display: flex; justify-content: space-between; align-items: center; color: #757575; }
.find i { font-style: normal; color: #999; }
.h-row { height: 35px; display: flex; align-items: center; padding: 0 0 11px 8px; }
.h-row svg { margin-top: 3px; }
.odd { background: #fbfbfb; }
.h-row a { margin-left: 5px; width: 68px; font-size: 14px; font-weight: 700; color: #000; text-decoration: underline; }
.h-row span { font-size: 14px; color: #555; letter-spacing: -.2px; }
.h-pad { height: 7px; background: #fbfbfb; }
.h-foot { height: 42px; background: #eee; display: flex; align-items: center; justify-content: flex-end; padding-right: 17px; gap: 4.500px; color: #204a87; }
.h-foot a { text-decoration: underline; letter-spacing: -.1px; }

/* workspace */
.main { padding: 28px 0 0 22px; width: 560px; }
h1 { margin: 0; font-size: 32px; line-height: 40px; color: #333; white-space: nowrap; letter-spacing: -.26px; }
.path { display: flex; align-items: center; height: 64px; padding: 13px 0 0 1px; }
.path .big { margin-top: -3px; }
.path-input { width: 180px; height: 29px; border: 1px solid #aaa; margin-left: 5px; }
.go { margin-top: 3px; }
.files { margin: 4px 0 0 33px; }
.row { display: grid; grid-template-columns: 16px 203px 136px 113px 32px; height: 24px; line-height: 24px; white-space: nowrap; }
.row svg { width: 16px; height: 20px; margin-top: 1px; }
.row a { color: #204a87; text-decoration: underline; letter-spacing: -.12px; }
.row a:nth-child(2) { margin-left: 4.500px; }
.row time { color: #888; padding-left: 4px; letter-spacing: -.12px; }
.row span { color: #888; text-align: right; }
.row a:last-child:nth-child(5) { margin-left: 1px; letter-spacing: 0; }
.zip { display: flex; align-items: center; justify-content: flex-end; width: 393px; margin-top: 15px; color: #204a87; text-decoration: underline; white-space: nowrap; }

.footer { height: 44px; border-top: 1px solid #d3d7cf; background: #f6faf2; display: flex; align-items: center; justify-content: flex-end; padding: 3px 17px 0 0; font-size: 14px; letter-spacing: -.13px; }
.footer a { text-decoration: underline; color: #204a87; margin-left: 16px; }
.footer .f-ver { color: #5c3566; letter-spacing: -.2px; }
```
